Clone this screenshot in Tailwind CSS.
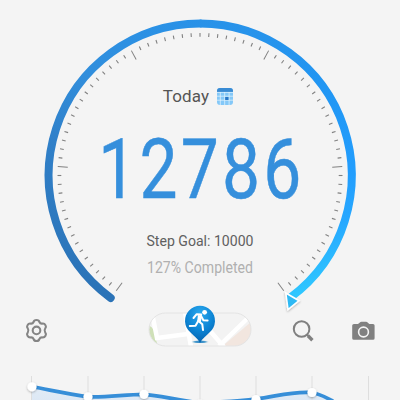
<!DOCTYPE html>
<html lang="en">
<head>
<meta charset="utf-8">
<title>Step Counter</title>
<script src="https://cdn.jsdelivr.net/npm/@tailwindcss/browser@4"></script>
</head>
<body class="w-[400px] h-[400px] overflow-hidden bg-[#f4f4f4] font-['Roboto',sans-serif]">
<main class="flex flex-col w-[400px] h-[400px] overflow-hidden">
  <section class="relative h-[310px] shrink-0">
    <svg class="absolute inset-0 overflow-visible" width="400" height="310" viewBox="0 0 400 310" fill="none">
      <defs>
        <linearGradient id="la" x1="110" y1="298" x2="200" y2="20" gradientUnits="userSpaceOnUse"><stop stop-color="#2b73b7"/><stop offset=".45" stop-color="#3080c9"/><stop offset=".7" stop-color="#318edc"/><stop offset="1" stop-color="#2992e8"/></linearGradient>
        <linearGradient id="ra" x1="200" y1="20" x2="290" y2="298" gradientUnits="userSpaceOnUse"><stop stop-color="#2992e8"/><stop offset=".35" stop-color="#2196f3"/><stop offset=".65" stop-color="#229dfd"/><stop offset=".8" stop-color="#26a7ff"/><stop offset="1" stop-color="#2fc7ff"/></linearGradient>
        <filter id="sh" x="-50%" y="-50%" width="200%" height="200%"><feDropShadow dx="0" dy="1" stdDeviation="1.3" flood-color="#000" flood-opacity=".3"/></filter>
      </defs>
      <path d="M110.7 298A152 152 0 0 1 200 23.5" stroke="url(#la)" stroke-width="8" stroke-linecap="round"/>
      <path d="M199.8 23.5A152 152 0 0 1 290.5 297.4" stroke="url(#ra)" stroke-width="8"/>
      <g id="ticks" stroke="#808080"></g>
      <path d="M285.8 293L299 300.7L288 309.5Z" fill="#2eb9f4" stroke="#fff" stroke-width="1.6" filter="url(#sh)"/>
    </svg>
    <div class="relative flex flex-col items-center pt-[84px]">
      <div class="flex items-center h-6 gap-[8px] pr-[5px] pl-[1px]">
        <span class="text-[17px] leading-6 text-[#555] tracking-[0.1px]">Today</span>
        <svg width="16" height="17" viewBox="0 0 16 17"><rect width="16" height="17" rx="3" fill="#84c8f8"/><path d="M0 4V3Q0 0 3 0H13Q16 0 16 3V4Z" fill="#398bd4"/><g stroke="#e8f5fd" stroke-opacity=".8" stroke-width=".9"><path d="M0 4.4H16M0 8.2H16M0 12.2H16M3.3 4V17M7.7 4V17M12.1 4V17"/></g><rect x="8.2" y="9" width="3.3" height="3" fill="#2878c8"/></svg>
      </div>
      <svg class="overflow-visible" width="200" height="90" viewBox="100 108 200 90"><text transform="translate(98.2 198) scale(.81 1)" font-family="Roboto" font-size="83.5" letter-spacing="4" fill="#358fdc" stroke="#358fdc" stroke-width=".5">12786</text></svg>
      <svg class="mt-[32px] overflow-visible" width="120" height="50" viewBox="140 230 120 50"><text x="146.5" y="245.5" font-family="Roboto" font-size="14" fill="#606060" textLength="107" lengthAdjust="spacingAndGlyphs">Step Goal: 10000</text><text x="147" y="272.6" font-family="Roboto" font-size="15.7" fill="#b0b0b0" textLength="106" lengthAdjust="spacingAndGlyphs">127% Completed</text></svg>
    </div>
  </section>
  <nav class="relative flex h-[38px] shrink-0 items-center">
    <svg class="ml-[24px] mt-[3px]" width="25" height="25" viewBox="0 0 25 25" fill="none" stroke="#858585" stroke-width="2.1" stroke-linejoin="round"><path d="M9.6 4Q10 2 12.5 2T15.4 4Q16.2 5.8 18.3 5.6Q20.4 5.2 21.5 7.2Q22.6 9 21.2 10.5Q19.9 12.4 21.2 14.3Q22.6 16 21.5 17.8Q20.4 19.7 18.3 19.4Q16.2 19.2 15.4 21Q15 23 12.5 23T9.6 21Q8.8 19.2 6.7 19.4Q4.6 19.7 3.5 17.8Q2.4 16 3.8 14.3Q5.1 12.4 3.8 10.5Q2.4 9 3.5 7.2Q4.6 5.2 6.7 5.6Q8.8 5.8 9.6 4Z"/><circle cx="12.5" cy="12.4" r="3.8"/></svg>
    <div class="ml-[99px] mt-[1px] h-[34px] w-[104px]">
      <svg class="overflow-visible" width="104" height="34" viewBox="148 313 104 34">
        <defs>
          <clipPath id="pill"><rect x="149" y="313" width="102" height="33" rx="16.5"/></clipPath>
          <radialGradient id="pin" cx=".5" cy=".22" r=".8"><stop stop-color="#2ba9ee"/><stop offset=".55" stop-color="#0c84d4"/><stop offset="1" stop-color="#0660ac"/></radialGradient>
          <filter id="soft"><feGaussianBlur stdDeviation="1.2 .6"/></filter>
        </defs>
        <g clip-path="url(#pill)">
          <path d="M148 312H252V347H148Z" fill="#f3f3f3"/>
          <path d="M148 325Q155 328 155 336L158 347H148Z" fill="#cfe0b8"/>
          <path d="M225 344L251 322V347H225Z" fill="#f2e6df"/>
          <path d="M152 313L157 338L188 334M185 312L191 347M205 325L224 347M219 346L249 317" fill="none" stroke="#fff" stroke-width="4.5"/>
        </g>
        <rect x="149" y="313" width="102" height="33" rx="16.5" fill="none" stroke="#e4e4e4"/>
        <ellipse cx="200" cy="341.8" rx="7" ry="1.3" fill="#0877bd" opacity=".8" filter="url(#soft)"/>
        <path d="M200 343C198 338.5 194 336 190.3 332.2A15 15 0 1 1 209.7 332.2C206 336 202 338.5 200 343Z" fill="url(#pin)"/>
        <circle cx="204.6" cy="312.3" r="2.4" fill="#fff"/>
        <path d="M193.5 318L196.7 314.2L201.2 314.4L198.8 321.2L202.3 324.3L203 330M200.8 315.5L203.4 320.3L207.6 320.5M198.2 321L195.5 325.8L189.8 326" fill="none" stroke="#fff" stroke-width="2" stroke-linecap="round" stroke-linejoin="round"/>
        <path d="M198 315L202 316L200.8 322L197 322Z" fill="#fff"/>
      </svg>
    </div>
    <svg class="ml-[40px] mt-[4px]" width="22" height="22" viewBox="292 320 22 22" fill="none" stroke="#808080"><circle cx="301.6" cy="329" r="7.8" stroke-width="2"/><path d="M307 334.5L308.5 336" stroke-width="2"/><path d="M308 335.8L312.4 340.2" stroke-width="3.4"/></svg>
    <svg class="ml-[38px] mt-[3px]" width="23" height="20" viewBox="352 320 23 20"><path d="M354 323H358L360.5 321Q361 320.7 361.5 320.7H366Q366.6 320.7 367 321L369.3 323H373Q374.6 323 374.6 324.6V337.2Q374.6 338.8 373 338.8H354Q352.2 338.8 352.2 337.2V324.6Q352.2 323 354 323Z" fill="#808080"/><circle cx="363.5" cy="331" r="4.9" fill="#808080" stroke="#f4f4f4" stroke-width="1.6"/></svg>
  </nav>
  <section class="mt-[28px] h-[24px] shrink-0">
    <svg width="400" height="24" viewBox="0 376 400 24" fill="none">
      <defs><linearGradient id="area" x1="0" y1="385" x2="0" y2="405" gradientUnits="userSpaceOnUse"><stop stop-color="#e2ecf6"/><stop offset="1" stop-color="#dbe7f4"/></linearGradient></defs>
      <path d="M32 386.8L88 396.8L144 394.3L186 401H32ZM238 401L256 399C275 397 290 390 312 392.5C320 394 325 397 333 401Z" fill="url(#area)"/>
      <path d="M31.5 376V400M88 376V400M144 376V400M200 376V400M256 376V400M312 376V400M368.5 376V400" stroke="#dedede"/>
      <path d="M32 386.8C50 390 66 393.5 88 396.8C108 397.5 124 394.5 144 394.3C158 395 174 399.5 200 403C220 402 238 401 256 399C275 397 290 391 312 392.5C320 394 325 397 333 401" stroke="#368ed8" stroke-width="3.7"/>
      <g fill="#fff" filter="url(#sh)"><circle cx="32" cy="386.8" r="4.6"/><circle cx="88" cy="396.8" r="4.6"/><circle cx="144" cy="394.3" r="4.6"/><circle cx="200" cy="404" r="4.6"/><circle cx="256" cy="399.5" r="4.6"/><circle cx="312" cy="392.5" r="4.6"/></g>
    </svg>
  </section>
</main>
<script>
  // 80 divisions over a 288 degree sweep, a long mark every 16
  const g = document.getElementById('ticks');
  for (let i = 0; i <= 80; i++) {
    const major = i % 16 === 0;
    const l = document.createElementNS('http://www.w3.org/2000/svg', 'line');
    l.setAttribute('x1', 200); l.setAttribute('x2', 200);
    l.setAttribute('y1', 33); l.setAttribute('y2', major ? 43 : 36.8);
    l.setAttribute('stroke-width', major ? 1 : 1.1);
    l.setAttribute('transform', `rotate(${-144 + i * 3.6} 200 175.5)`);
    g.appendChild(l);
  }
</script>
</body>
</html>
